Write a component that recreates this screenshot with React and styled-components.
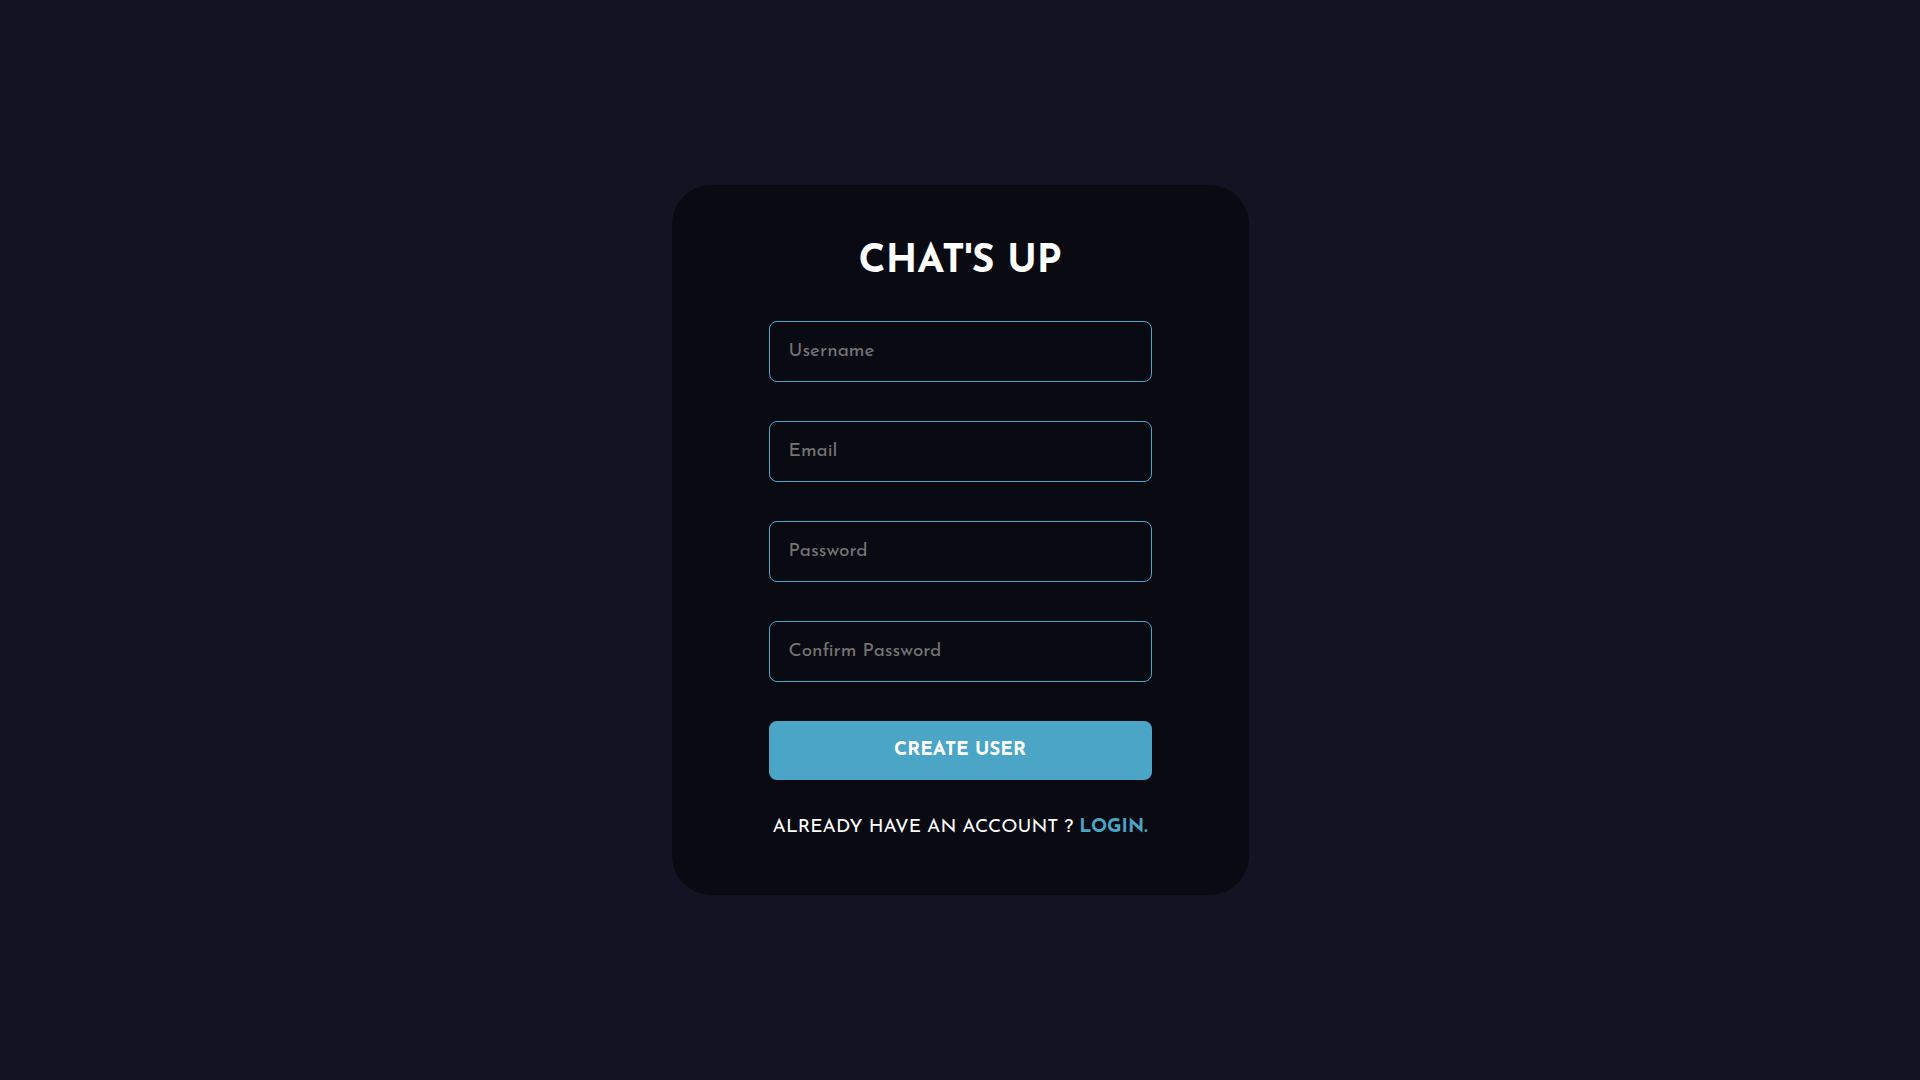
import React from "react";
import styled, { createGlobalStyle } from "styled-components";

const GlobalStyle = createGlobalStyle`
  * { margin: 0; padding: 0; box-sizing: border-box; }
  body { font-family: "Josefin Sans", Lato, "Open Sans", sans-serif; }
`;

const Page = styled.main`
  min-height: 100vh;
  display: flex;
  flex-direction: column;
  justify-content: center;
  align-items: center;
  background-color: #131324;
`;

const Form = styled.form`
  display: flex;
  flex-direction: column;
  gap: 39px;
  width: 100%;
  max-width: 577px;
  padding: 58px 97px;
  border-radius: 39px;
  background-color: rgba(0, 0, 0, 0.46);
`;

const Title = styled.h1`
  color: white;
  font-size: 39px;
  line-height: 39px;
  text-align: center;
  text-transform: uppercase;
`;

const Field = styled.input`
  width: 100%;
  padding: 19px;
  border: 1px solid #4aa5c6;
  border-radius: 8px;
  background: transparent;
  color: white;
  font-family: inherit;
  font-size: 19px;
  line-height: 21px;
  height: 61px;

  &::placeholder { color: #757575; }
  &:focus { border-color: #997af0; outline: none; }
`;

const SubmitButton = styled.button`
  padding: 19px 39px;
  border: none;
  border-radius: 8px;
  background-color: #4aa5c6;
  color: white;
  cursor: pointer;
  font-family: inherit;
  font-size: 19px;
  line-height: 21px;
  font-weight: bold;
  text-transform: uppercase;
`;

const Prompt = styled.p`
  color: white;
  font-size: 19px;
  line-height: 18px;
  text-align: center;
  text-transform: uppercase;
`;

const LoginLink = styled.a`
  color: #4aa5c6;
  font-weight: bold;
  text-decoration: none;
`;

const fields = [
  { name: "username", label: "Username", type: "text" },
  { name: "email", label: "Email", type: "email" },
  { name: "password", label: "Password", type: "password" },
  { name: "confirmPassword", label: "Confirm Password", type: "password" },
];

export default function App() {
  return (
    <Page>
      <GlobalStyle />
      <Form onSubmit={(event) => event.preventDefault()}>
        <Title>Chat's Up</Title>
        {fields.map(({ name, label, type }) => (
          <Field key={name} name={name} type={type} placeholder={label} aria-label={label} />
        ))}
        <SubmitButton type="submit">Create User</SubmitButton>
        <Prompt>
          Already have an account ? <LoginLink href="/login">Login.</LoginLink>
        </Prompt>
      </Form>
    </Page>
  );
}
